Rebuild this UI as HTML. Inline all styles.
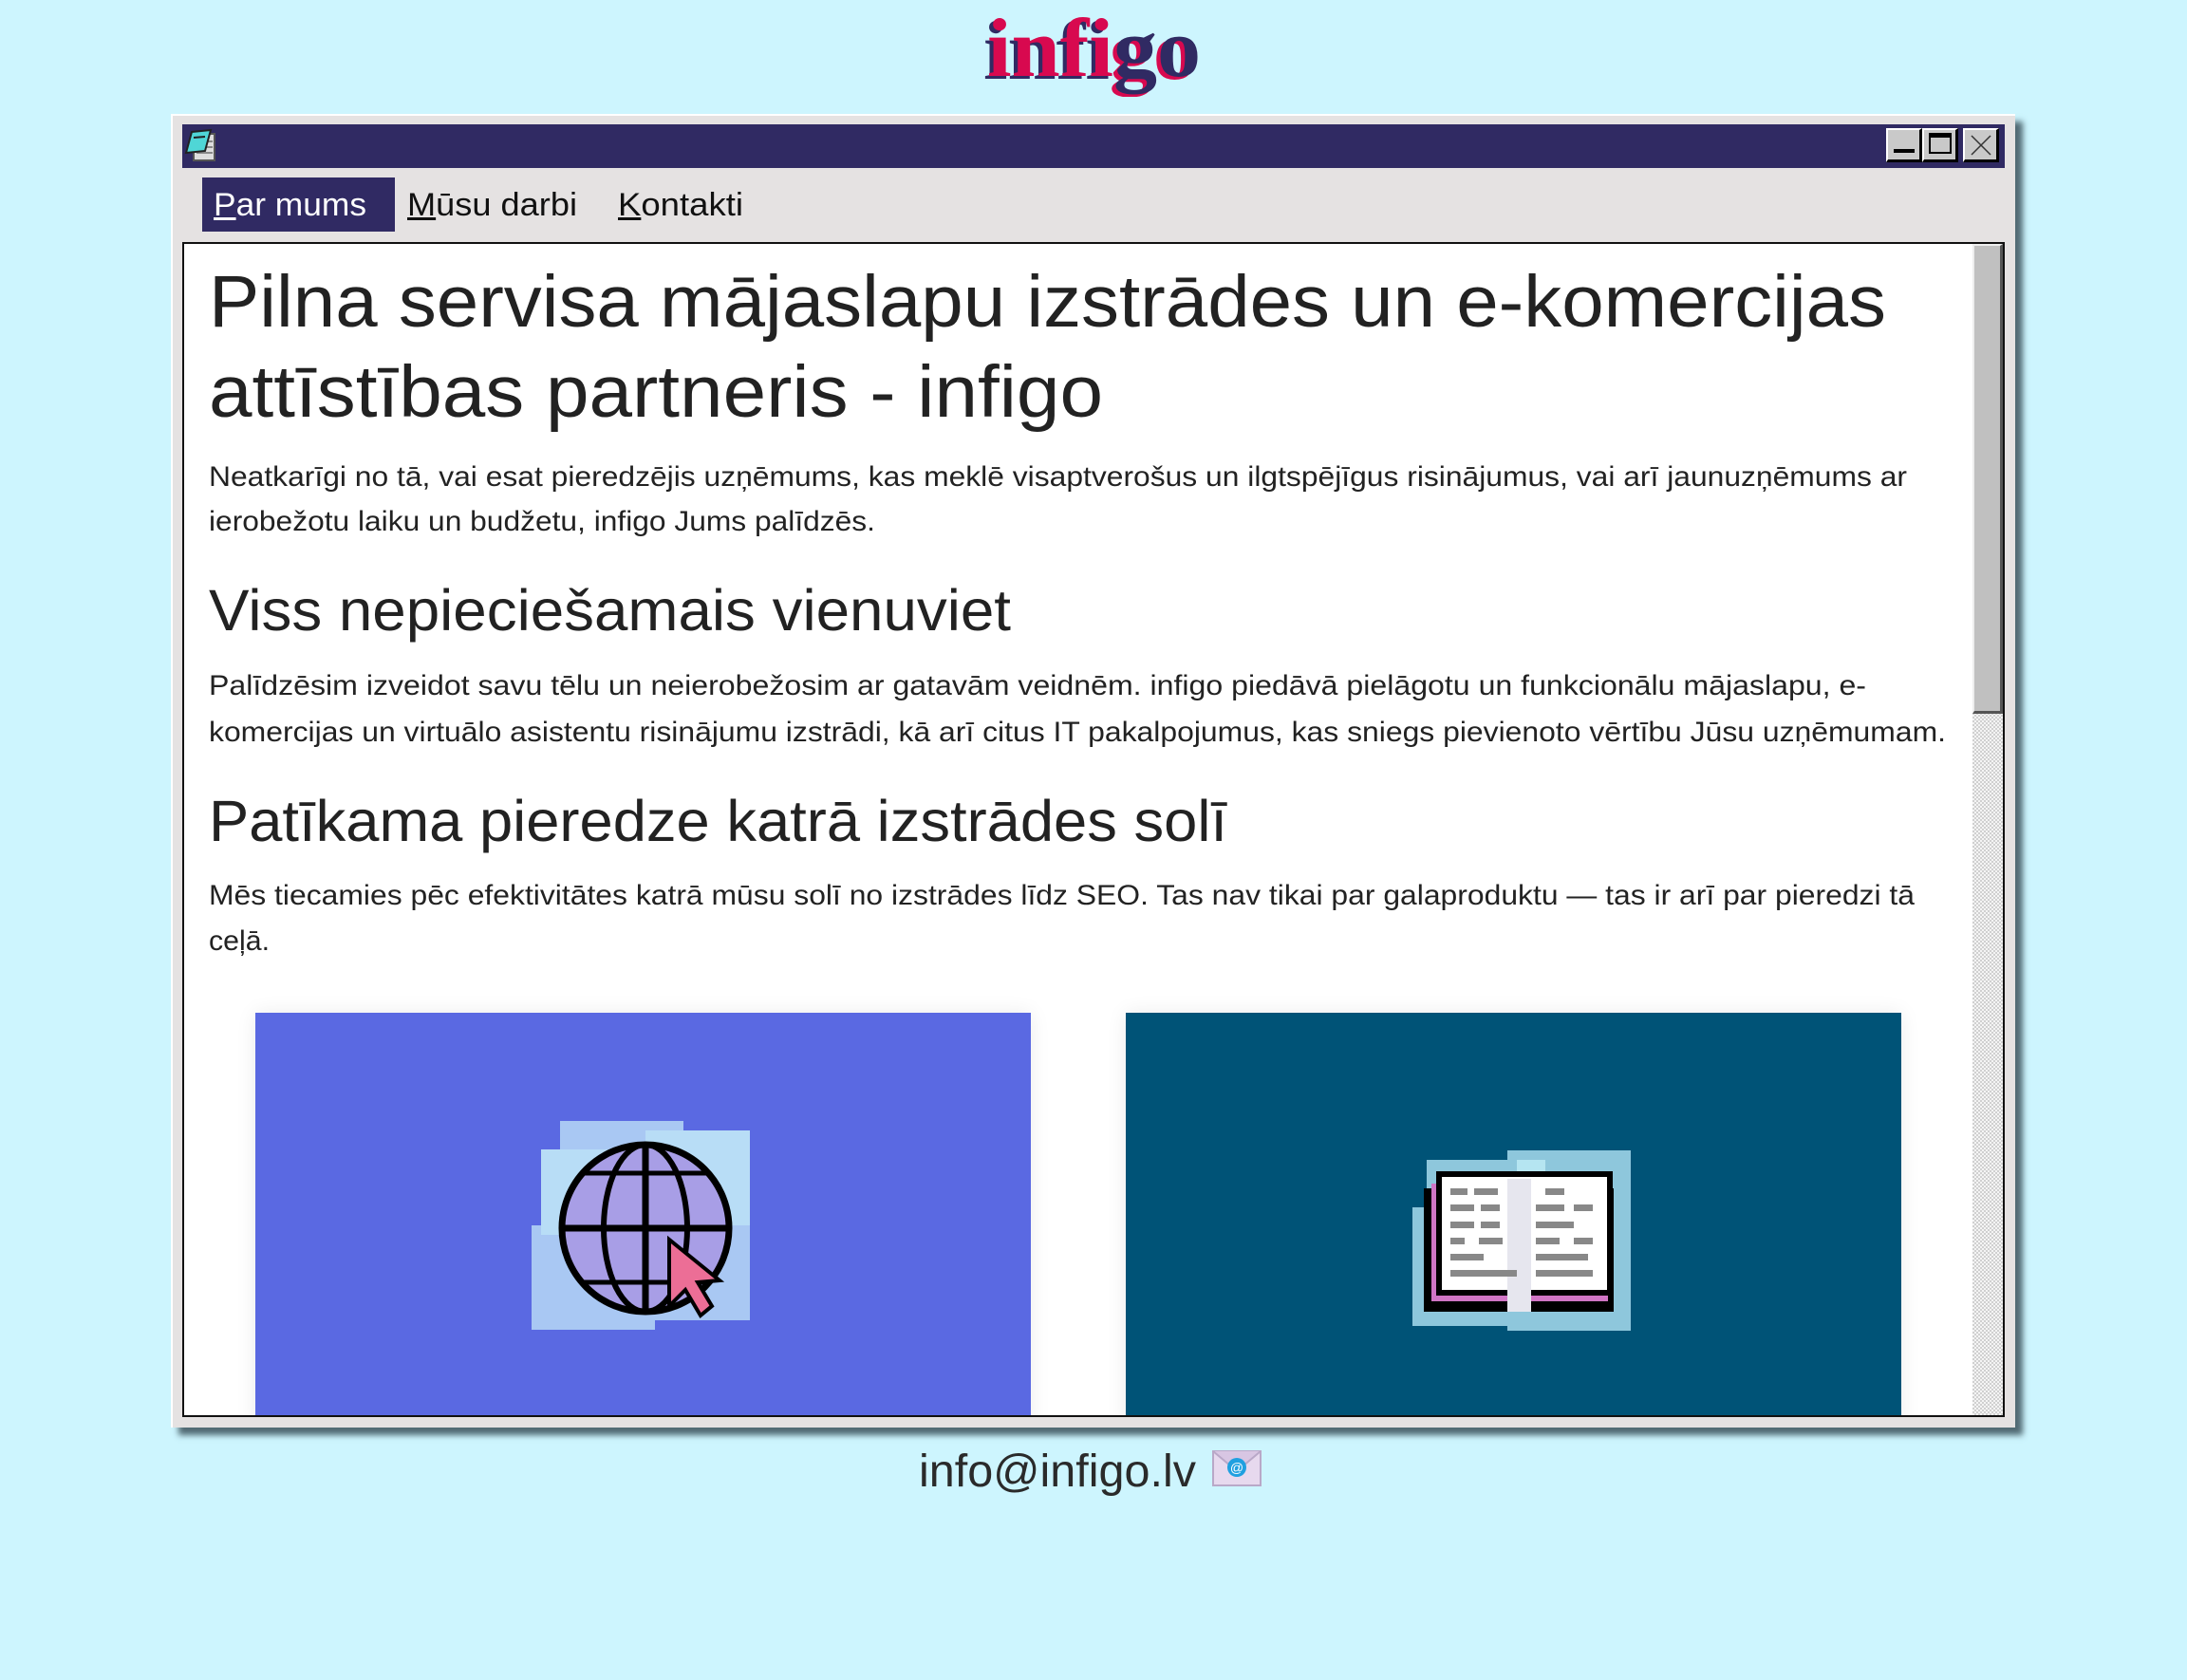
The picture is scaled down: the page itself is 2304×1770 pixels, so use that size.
<!DOCTYPE html>
<html><head><meta charset="utf-8">
<style>
*{margin:0;padding:0;box-sizing:border-box}
html,body{width:2304px;height:1770px;overflow:hidden;background:#cdf5fe;font-family:"Liberation Sans",sans-serif;color:#222}
.a{position:absolute}
.t{position:absolute;white-space:nowrap;line-height:1;transform-origin:0 0}
#win{left:180px;top:120px;width:1943px;height:1384px;background:#e5e2e2;box-shadow:8px 8px 6px rgba(40,60,70,.75);border-top:2px solid #fff;border-left:2px solid #fff}
#title{left:192px;top:131px;width:1920px;height:46px;background:#302a63}
.btn{position:absolute;top:135px;height:36px;background:#c9c9c9;border-top:2px solid #fff;border-left:2px solid #fff;border-right:3px solid #000;border-bottom:3px solid #000}
#content{left:192px;top:255px;width:1920px;height:1238px;background:#fff;border:2px solid #111;overflow:hidden}
.card{position:absolute;top:810px;height:440px}
</style></head><body>
<div class="t" style="left:1040px;top:8px;font-family:'Liberation Serif',serif;font-weight:bold;font-size:88px;color:#d8094f;text-shadow:-4px 3px 0 #302a63" data-w="225">infi<span style="color:#302a63;text-shadow:-4px 3px 0 #d8094f">go</span></div>

<div id="win" class="a"></div>
<div id="title" class="a"></div>
<svg class="a" style="left:194px;top:133px" width="40" height="40" viewBox="0 0 40 40"><rect x="10" y="8" width="22" height="28" fill="#ddd" stroke="#555" stroke-width="2"/><line x1="13" y1="16" x2="30" y2="16" stroke="#888" stroke-width="2"/><line x1="13" y1="22" x2="30" y2="22" stroke="#888" stroke-width="2"/><line x1="13" y1="28" x2="30" y2="28" stroke="#888" stroke-width="2"/><polygon points="8,6 28,4 22,26 2,28" fill="#4fd6d6" stroke="#222" stroke-width="2"/><line x1="10" y1="12" x2="22" y2="11" stroke="#222" stroke-width="2"/></svg>
<div class="btn" style="left:1987px;width:38px"><div class="a" style="left:6px;top:20px;width:22px;height:4px;background:#000"></div></div>
<div class="btn" style="left:2025px;width:38px"><div class="a" style="left:5px;top:3px;width:24px;height:22px;border:2px solid #000;border-top-width:5px"></div></div>
<div class="btn" style="left:2068px;width:38px"><svg class="a" style="left:4px;top:3px" width="26" height="26"><path d="M3 3L23 23M23 3L3 23" stroke="#333" stroke-width="1.5"/></svg></div>

<div class="a" style="left:213px;top:187px;width:203px;height:57px;background:#302a63"></div>
<div class="t" style="left:225px;top:199px;font-size:34px;color:#fff" data-w="161"><u>P</u>ar mums</div>
<div class="t" style="left:429px;top:199px;font-size:34px;color:#111" data-w="179"><u>M</u>ūsu darbi</div>
<div class="t" style="left:651px;top:199px;font-size:34px;color:#111" data-w="132"><u>K</u>ontakti</div>

<div id="content" class="a">
<div class="a" style="left:1884px;top:0;width:32px;height:1236px;background-color:#eee;background-image:repeating-conic-gradient(#d0d0d0 0 25%,#f4f4f4 0 50%);background-size:4px 4px"></div>
<div class="a" style="left:1884px;top:0;width:32px;height:495px;background:#c0c0c0;border-top:2px solid #eee;border-left:2px solid #eee;border-right:3px solid #555;border-bottom:3px solid #555"></div>
<div class="card" style="left:75px;width:817px;background:#5a69e2;box-shadow:0 0 20px rgba(0,0,0,.08)"></div>
<div class="card" style="left:992px;width:817px;background:#005377;box-shadow:0 0 20px rgba(0,0,0,.08)"></div>
<svg class="a" style="left:366px;top:924px" width="240" height="230" viewBox="0 0 240 230">
<rect x="0" y="110" width="130" height="110" fill="#a9c8f3"/><rect x="30" y="0" width="130" height="120" fill="#a9c8f3"/><rect x="60" y="80" width="170" height="130" fill="#a9c8f3"/><rect x="120" y="10" width="110" height="100" fill="#b8ddf6"/><rect x="10" y="30" width="90" height="90" fill="#b8ddf6"/>
<circle cx="120" cy="113" r="88" fill="#a89ee6" stroke="#000" stroke-width="7"/>
<ellipse cx="120" cy="113" rx="44" ry="88" fill="none" stroke="#000" stroke-width="6"/>
<line x1="120" y1="25" x2="120" y2="201" stroke="#000" stroke-width="7"/><line x1="32" y1="113" x2="208" y2="113" stroke="#000" stroke-width="7"/>
<line x1="55" y1="55" x2="185" y2="55" stroke="#000" stroke-width="5"/><line x1="55" y1="170" x2="185" y2="170" stroke="#000" stroke-width="5"/>
<polygon points="145,125 145,195 162,178 178,205 190,195 175,170 198,168" fill="#ec6e96" stroke="#000" stroke-width="4"/></svg>
<svg class="a" style="left:1294px;top:940px" width="240" height="210" viewBox="0 0 240 210">
<rect x="0" y="75" width="130" height="125" fill="#8ec7dc"/><rect x="15" y="25" width="130" height="110" fill="#8ec7dc"/><rect x="100" y="15" width="130" height="190" fill="#8ec7dc"/><rect x="110" y="25" width="30" height="20" fill="#b5e5f1"/>
<rect x="12" y="55" width="200" height="130" fill="#000"/><rect x="20" y="50" width="186" height="124" fill="#d075c4"/>
<rect x="28" y="40" width="180" height="125" fill="#fff" stroke="#000" stroke-width="6"/><rect x="100" y="45" width="25" height="140" fill="#e6e6ee"/>
<g fill="#888"><rect x="40" y="55" width="18" height="7"/><rect x="65" y="55" width="25" height="7"/><rect x="140" y="55" width="20" height="7"/><rect x="40" y="72" width="25" height="7"/><rect x="72" y="72" width="20" height="7"/><rect x="130" y="72" width="30" height="7"/><rect x="170" y="72" width="20" height="7"/><rect x="40" y="90" width="25" height="7"/><rect x="72" y="90" width="20" height="7"/><rect x="130" y="90" width="40" height="7"/><rect x="40" y="107" width="15" height="7"/><rect x="70" y="107" width="25" height="7"/><rect x="130" y="107" width="25" height="7"/><rect x="170" y="107" width="20" height="7"/><rect x="40" y="124" width="35" height="7"/><rect x="130" y="124" width="55" height="7"/><rect x="40" y="141" width="70" height="7"/><rect x="130" y="141" width="60" height="7"/></g></svg>
</div>

<div class="t" style="left:220px;top:280px;font-size:77px" data-w="1767">Pilna servisa mājaslapu izstrādes un e-komercijas</div>
<div class="t" style="left:220px;top:375px;font-size:77px" data-w="942">attīstības partneris - infigo</div>
<div class="t" style="left:220px;top:488px;font-size:30px" data-w="1789">Neatkarīgi no tā, vai esat pieredzējis uzņēmums, kas meklē visaptverošus un ilgtspējīgus risinājumus, vai arī jaunuzņēmums ar</div>
<div class="t" style="left:220px;top:535px;font-size:30px" data-w="702">ierobežotu laiku un budžetu, infigo Jums palīdzēs.</div>
<div class="t" style="left:220px;top:613px;font-size:61px" data-w="845">Viss nepieciešamais vienuviet</div>
<div class="t" style="left:220px;top:708px;font-size:30px" data-w="1746">Palīdzēsim izveidot savu tēlu un neierobežosim ar gatavām veidnēm. infigo piedāvā pielāgotu un funkcionālu mājaslapu, e-</div>
<div class="t" style="left:220px;top:757px;font-size:30px" data-w="1830">komercijas un virtuālo asistentu risinājumu izstrādi, kā arī citus IT pakalpojumus, kas sniegs pievienoto vērtību Jūsu uzņēmumam.</div>
<div class="t" style="left:220px;top:835px;font-size:61px" data-w="1073">Patīkama pieredze katrā izstrādes solī</div>
<div class="t" style="left:220px;top:929px;font-size:30px" data-w="1797">Mēs tiecamies pēc efektivitātes katrā mūsu solī no izstrādes līdz SEO. Tas nav tikai par galaproduktu — tas ir arī par pieredzi tā</div>
<div class="t" style="left:220px;top:977px;font-size:30px" data-w="64">ceļā.</div>

<div class="t" style="left:968px;top:1527px;font-size:48px;color:#2a2a2a" data-w="292">info@infigo.lv</div>
<svg class="a" style="left:1277px;top:1528px" width="52" height="38" viewBox="0 0 52 38"><rect x="1" y="1" width="50" height="36" fill="#e7d9ee" stroke="#b9a8c8" stroke-width="2"/><path d="M1 1L26 22L51 1" fill="#d8c6e3" stroke="#b9a8c8" stroke-width="2"/><circle cx="26" cy="18" r="10" fill="#1fa0e0"/><text x="26" y="23" font-size="14" text-anchor="middle" fill="#fff" font-family="Liberation Sans">@</text></svg>

<script>
document.querySelectorAll('[data-w]').forEach(function(e){var w=e.getBoundingClientRect().width;var t=+e.getAttribute('data-w');if(w>0)e.style.transform='scaleX('+(t/w)+')';});
</script>
</body></html>
